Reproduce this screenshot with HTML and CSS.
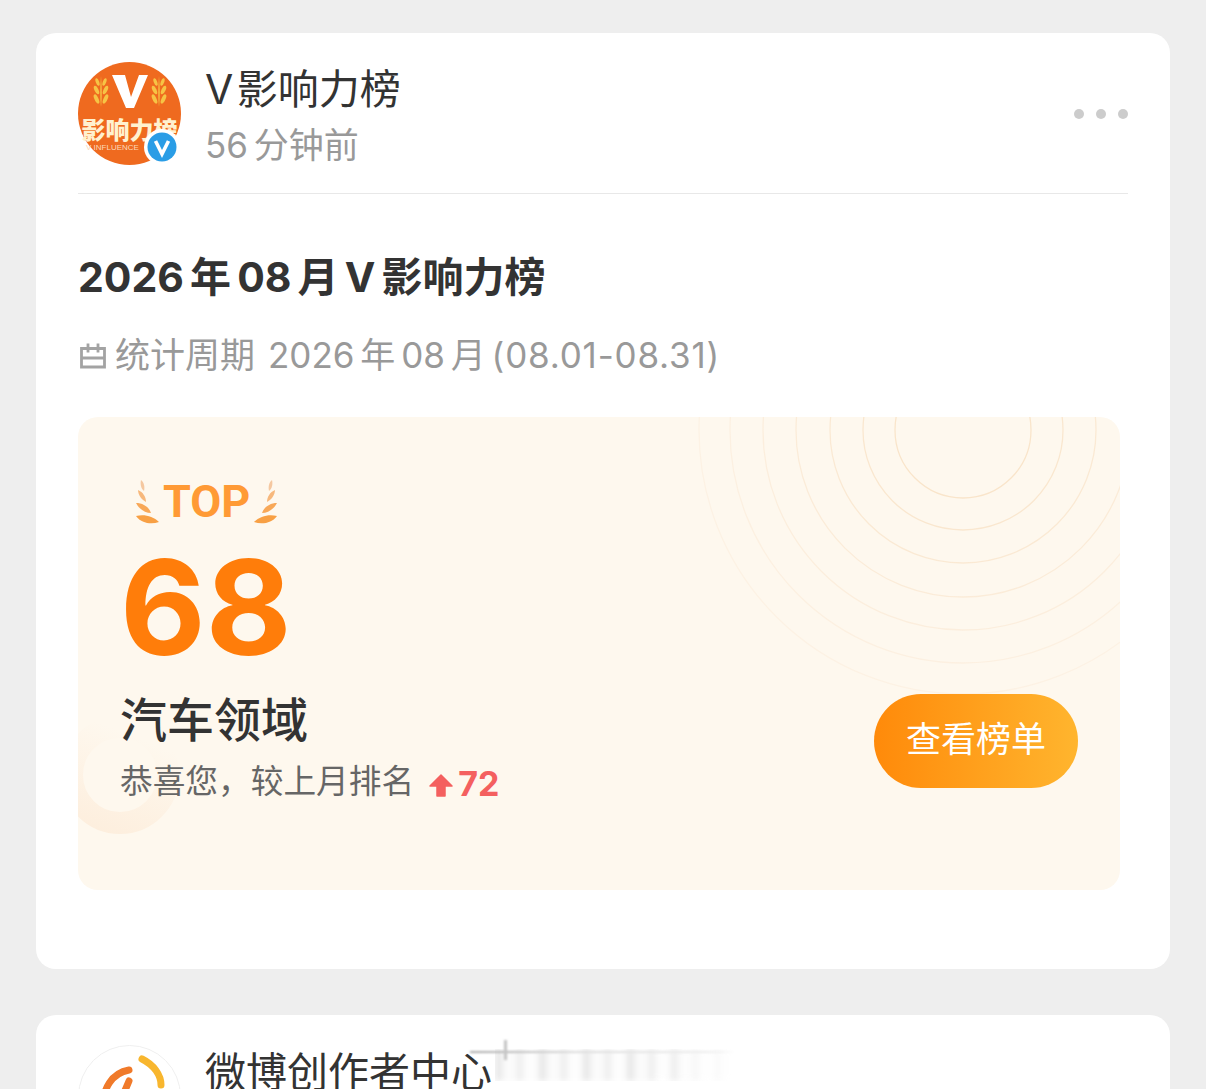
FILE: index.html
```html
<!DOCTYPE html>
<html lang="zh-CN">
  <head>
    <meta charset="UTF-8">
    <meta name="viewport" content="width=device-width, initial-scale=1.0">
    <title>V影响力榜</title>
    <link rel="stylesheet" href="styles.css">
  </head>
  <body>
    <div class="card">
      <div class="header">
        <svg class="avatar" viewBox="0 0 103 103">
          <circle cx="51.5" cy="51.5" r="51.5" fill="#ef6a1f"/>
          <path d="M34 13H47L53 35L61 13H70L56 46H48Z" fill="#fff"/>
          <g fill="#f6c445">
            <path d="M23 45C22 36 22 26 23 14C24 26 24 36 23 45Z"/>
            <ellipse cx="18.5" cy="37" rx="2" ry="5" transform="rotate(-25 18.5 37)"/>
            <ellipse cx="27.5" cy="37" rx="2" ry="5" transform="rotate(25 27.5 37)"/>
            <ellipse cx="18.5" cy="28" rx="2" ry="4.6" transform="rotate(-25 18.5 28)"/>
            <ellipse cx="27.5" cy="28" rx="2" ry="4.6" transform="rotate(25 27.5 28)"/>
            <ellipse cx="19.5" cy="20" rx="1.7" ry="4" transform="rotate(-20 19.5 20)"/>
            <ellipse cx="26.5" cy="20" rx="1.7" ry="4" transform="rotate(20 26.5 20)"/>
            <path d="M81 45C80 36 80 26 81 14C82 26 82 36 81 45Z"/>
            <ellipse cx="76.5" cy="37" rx="2" ry="5" transform="rotate(-25 76.5 37)"/>
            <ellipse cx="85.5" cy="37" rx="2" ry="5" transform="rotate(25 85.5 37)"/>
            <ellipse cx="76.5" cy="28" rx="2" ry="4.6" transform="rotate(-25 76.5 28)"/>
            <ellipse cx="85.5" cy="28" rx="2" ry="4.6" transform="rotate(25 85.5 28)"/>
            <ellipse cx="77.5" cy="20" rx="1.7" ry="4" transform="rotate(-20 77.5 20)"/>
            <ellipse cx="84.5" cy="20" rx="1.7" ry="4" transform="rotate(20 84.5 20)"/>
          </g>
          <text x="51.5" y="77" class="avatar-name">影响力榜</text>
          <text x="8" y="88" class="avatar-sub">V INFLUENCE</text>
          <circle cx="84" cy="85" r="18" fill="#fff"/>
          <circle cx="84" cy="85" r="14.5" fill="#2a9de6"/>
          <path d="M77.5 79L84 92L90.5 79" fill="none" stroke="#fff" stroke-width="3.6"/>
        </svg>
        <div class="who">
          <div class="name">V 影响力榜</div>
          <div class="time">56 分钟前</div>
        </div>
        <div class="dots"><i></i><i></i><i></i></div>
      </div>

      <h1 class="title">2026 年 08 月 V 影响力榜</h1>
      <p class="period">
        <svg class="cal" viewBox="0 0 26 26">
          <path d="M1.5 6H24.5V24.5H1.5ZM8 1V10M18 1V10M1.5 15.5H24.5" fill="none" stroke="#a3a3a3" stroke-width="2.8"/>
        </svg>
        <span>统计周期<span class="dates">2026 年 08 月 <span class="range">(08.01-08.31)</span></span></span>
      </p>

      <div class="panel">
        <svg class="rings" viewBox="0 0 1042 473">
          <defs>
            <radialGradient id="fade" gradientUnits="userSpaceOnUse" cx="885" cy="13" r="285">
              <stop offset="0.2" stop-color="#f9e4c9"/>
              <stop offset="0.75" stop-color="#fcefdf"/>
              <stop offset="1" stop-color="#fdf3e6"/>
            </radialGradient>
            <linearGradient id="ring" x1="0" y1="1" x2="0.4" y2="0">
              <stop offset="0" stop-color="#fdeedd"/>
              <stop offset="1" stop-color="#fef8ee"/>
            </linearGradient>
          </defs>
          <g fill="none" stroke="url(#fade)" stroke-width="1.3">
            <circle cx="885" cy="13" r="68"/>
            <circle cx="885" cy="13" r="100"/>
            <circle cx="885" cy="13" r="133"/>
            <circle cx="885" cy="13" r="167"/>
            <circle cx="885" cy="13" r="200"/>
            <circle cx="885" cy="13" r="233"/>
            <circle cx="885" cy="13" r="264"/>
          </g>
          <circle cx="42" cy="358" r="48" fill="none" stroke="url(#ring)" stroke-width="22"/>
        </svg>
        <div class="rank">
          <div class="top">
            <svg class="leaf" viewBox="0 0 28 44">
              <path d="M26 42C18 45 8 43 3 36C11 34 20 36 26 42Z" fill="#f8a044"/>
              <path d="M18 33C12 33 6 29 3 23C10 23 16 27 18 33Z" fill="#f8a858"/>
              <path d="M13 22C9 20 5 15 5 10C10 12 13 17 13 22Z" fill="#f7b87c"/>
              <path d="M11 11C8 9 7 4 8 0C11 2 12 7 11 11Z" fill="#f5c8a0"/>
            </svg>
            <span>TOP</span>
            <svg class="leaf flip" viewBox="0 0 28 44">
              <path d="M26 42C18 45 8 43 3 36C11 34 20 36 26 42Z" fill="#f8a044"/>
              <path d="M18 33C12 33 6 29 3 23C10 23 16 27 18 33Z" fill="#f8a858"/>
              <path d="M13 22C9 20 5 15 5 10C10 12 13 17 13 22Z" fill="#f7b87c"/>
              <path d="M11 11C8 9 7 4 8 0C11 2 12 7 11 11Z" fill="#f5c8a0"/>
            </svg>
          </div>
          <div class="number">68</div>
          <div class="field">汽车领域</div>
          <div class="change">
            恭喜您，较上月排名
            <svg class="arrow" viewBox="0 0 26 24"><path d="M13 2L24 13H17V23H9V13H2Z" fill="#f4605f" stroke="#f4605f" stroke-width="1.5" stroke-linejoin="round"/></svg>
            <span class="up">72</span>
          </div>
        </div>
        <div class="btn">查看榜单</div>
      </div>
    </div>

    <div class="card second">
      <div class="header">
        <svg class="avatar" viewBox="0 0 103 103">
          <circle cx="51.5" cy="51.5" r="51" fill="#fff" stroke="#efefef"/>
          <path d="M26 62C24 44 34 28 51 25" fill="none" stroke="#f07a2a" stroke-width="7" stroke-linecap="round"/>
          <path d="M64 14C76 20 83 30 83 40" fill="none" stroke="#f8b62e" stroke-width="7" stroke-linecap="round"/>
          <path d="M51 36L40 62" fill="none" stroke="#f07a2a" stroke-width="7" stroke-linecap="round"/>
        </svg>
        <div class="who">
          <div class="name">微博创作者中心</div>
        </div>
      </div>
      <div class="smear"></div>
      <div class="smear-line"></div>
      <div class="smear-nub"></div>
    </div>
  </body>
</html>
```

FILE: styles.css
```css
html, body {
  height: 1089px;
  overflow: hidden;
}
body {
  margin: 0;
  background-color: #eeeeee;
  font-family: Inter, "Noto Sans CJK SC", sans-serif;
  color: #333;
}
.card {
  box-sizing: border-box;
  width: 1134px;
  margin: 33px 0 0 36px;
  padding: 29px 42px 79px;
  background-color: #fff;
  border-radius: 20px;
}
.second {
  position: relative;
  margin-top: 46px;
  padding-top: 30px;
  height: 74px;
  overflow: hidden;
  border-radius: 20px 20px 0 0;
}
.header {
  display: flex;
  align-items: flex-start;
  height: 103px;
  padding-bottom: 28px;
  border-bottom: 1px solid #e8e8e8;
}
.second .header {
  border-bottom: 0;
}
.avatar {
  width: 103px;
  height: 103px;
  flex-shrink: 0;
}
.avatar-name {
  font-family: "Noto Sans CJK SC", sans-serif;
  font-size: 24px;
  font-weight: 900;
  fill: #fff1cf;
  text-anchor: middle;
}
.avatar-sub {
  font-family: "Liberation Sans", sans-serif;
  font-size: 8px;
  fill: #fbd9b8;
}
.who {
  margin-left: 24px;
  flex: 1;
}
.name {
  font-size: 41px;
  line-height: 56px;
  margin-top: -1px;
  color: #333;
  word-spacing: -8px;
}
.time {
  font-size: 35px;
  line-height: 56px;
  color: #999;
  word-spacing: -4px;
}
.dots {
  display: flex;
  gap: 12px;
  align-self: center;
}
.dots i {
  width: 10px;
  height: 10px;
  border-radius: 50%;
  background-color: #cccccc;
}
.title {
  margin: 54px 0 0;
  font-size: 41px;
  line-height: 58px;
  font-weight: 700;
  color: #333;
  word-spacing: -3.6px;
}
.period {
  display: flex;
  align-items: center;
  gap: 9px;
  margin: 23px 0 0;
  font-size: 35px;
  line-height: 52px;
  color: #999;
}
.dates {
  margin-left: 13px;
  word-spacing: -4px;
}
.range {
  letter-spacing: 0.8px;
}
.cal {
  width: 26px;
  height: 27px;
  margin-left: 2px;
}
.panel {
  position: relative;
  display: flex;
  justify-content: space-between;
  align-items: flex-end;
  box-sizing: border-box;
  width: 1042px;
  height: 473px;
  margin-top: 36px;
  padding: 60px 42px 102px 42px;
  background-color: #fef8ee;
  border-radius: 20px;
  overflow: hidden;
}
.rings {
  position: absolute;
  left: 0;
  top: 0;
  width: 1042px;
  height: 473px;
}
.rank {
  position: relative;
  align-self: flex-start;
}
.top {
  display: flex;
  align-items: center;
  gap: 2px;
  margin-left: 13px;
  font-family: Roboto, sans-serif;
  font-size: 45px;
  line-height: 50px;
  font-weight: 700;
  color: #ff9a35;
}
.leaf {
  width: 28px;
  height: 44px;
}
.flip {
  transform: scaleX(-1);
}
.number {
  font-size: 132px;
  line-height: 130px;
  font-weight: 700;
  margin-top: 15px;
  margin-left: 0;
  color: #ff7d0a;
}
.field {
  margin-top: 17px;
  font-size: 47px;
  line-height: 62px;
  font-weight: 500;
  color: #333;
}
.change {
  display: flex;
  align-items: center;
  margin-top: 4px;
  font-size: 32.7px;
  line-height: 46px;
  color: #666;
}
.arrow {
  width: 26px;
  height: 24px;
  margin: 8px 4px 0 14px;
}
.up {
  font-size: 34px;
  font-weight: 700;
  color: #f4605f;
  margin-top: 6px;
}
.btn {
  position: relative;
  width: 204px;
  height: 94px;
  border-radius: 47px;
  background: linear-gradient(90deg, #ff8a0a, #ffb52e);
  color: #fff;
  font-size: 35px;
  line-height: 90px;
  text-align: center;
}
.smear {
  position: absolute;
  left: 459px;
  top: 34px;
  width: 240px;
  height: 32px;
  filter: blur(3px);
  background:
    repeating-linear-gradient(90deg, #e6e6e6 0 7px, #fbfbfb 7px 22px, #ececec 22px 28px, #fdfdfd 28px 44px),
    #fff;
  -webkit-mask-image: linear-gradient(90deg, #000 65%, #0000);
  mask-image: linear-gradient(90deg, #000 65%, #0000);
}
.smear-line {
  position: absolute;
  left: 434px;
  top: 36px;
  width: 265px;
  height: 2px;
  filter: blur(1px);
  background: linear-gradient(90deg, #aaa, #ddd 40%, #eee 90%, #0000);
}
.smear-nub {
  position: absolute;
  left: 468px;
  top: 25px;
  width: 3px;
  height: 20px;
  filter: blur(1px);
  background-color: #c4c4c4;
}
```
